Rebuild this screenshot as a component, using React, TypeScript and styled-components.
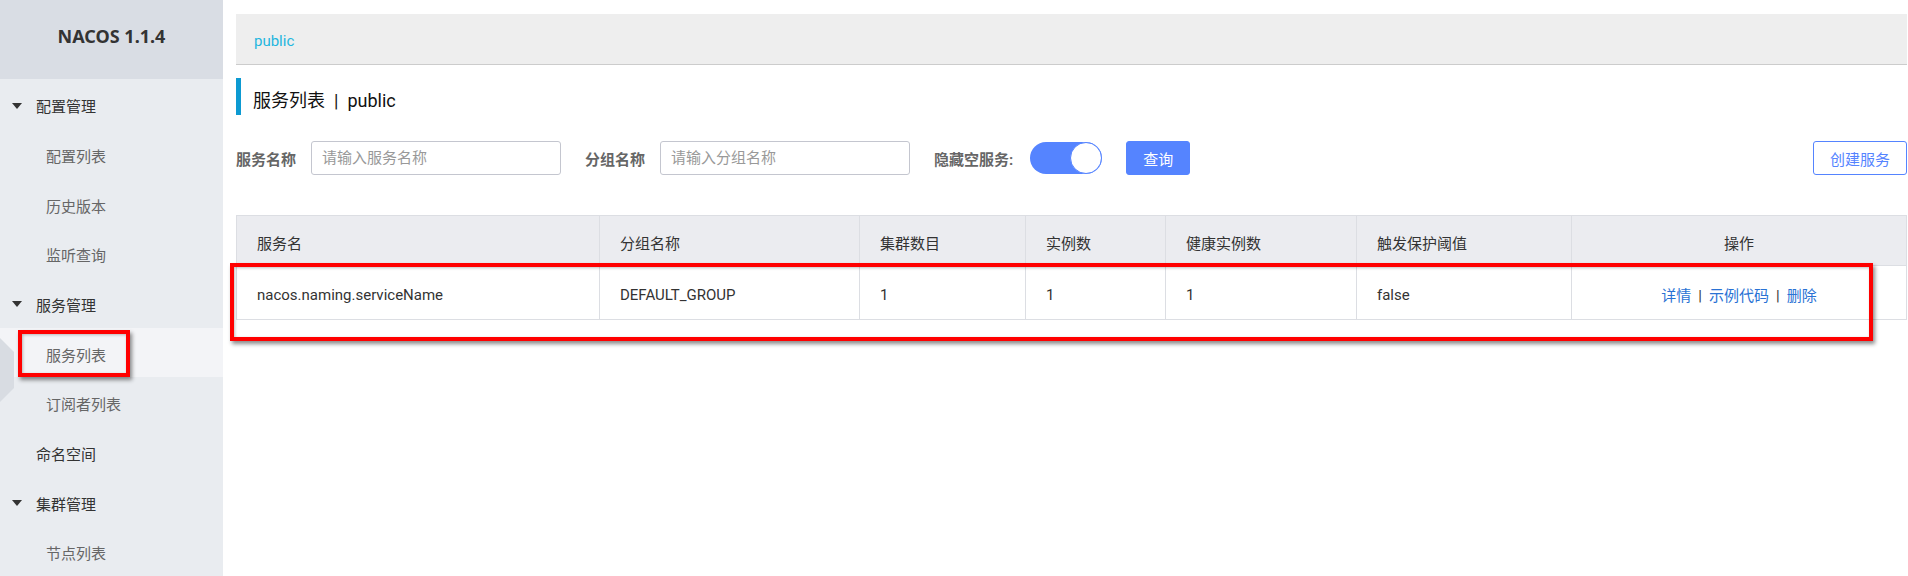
import React from 'react';
import styled, { createGlobalStyle } from 'styled-components';

const GlobalStyle = createGlobalStyle`
  html, body {
    margin: 0;
    padding: 0;
    background: #fff;
  }
  body {
    font-family: Roboto, "Noto Sans CJK SC", sans-serif;
    color: #333;
  }
  * {
    box-sizing: border-box;
  }
`;

const Layout = styled.div`
  display: flex;
  width: 1908px;
  height: 576px;
  overflow: hidden;
`;

const Sidebar = styled.aside`
  position: relative;
  flex: 0 0 223px;
  background: #e9ecf0;
  display: flex;
  flex-direction: column;
`;

const Brand = styled.div`
  height: 80px;
  background: #d9dde4;
  display: flex;
  align-items: center;
  justify-content: center;
  font-family: "Noto Sans", sans-serif;
  font-size: 18px;
  font-weight: 700;
  color: #333;
  padding-bottom: 8px;
`;

const MenuItem = styled.div<{ $level: number; $active?: boolean }>`
  position: relative;
  height: 50px;
  display: flex;
  align-items: center;
  padding-left: ${p => (p.$level === 0 ? 12 : 46)}px;
  font-size: 15px;
  color: ${p => (p.$level === 0 ? '#333' : '#666')};
  background: ${p => (p.$active ? '#f3f4f7' : 'transparent')};
  padding-top: 3px;
`;

const Caret = styled.span<{ $show: boolean }>`
  width: 24px;
  display: inline-flex;
  align-items: center;
  visibility: ${p => (p.$show ? 'visible' : 'hidden')};
  &::before {
    content: '';
    border-left: 5px solid transparent;
    border-right: 5px solid transparent;
    border-top: 6px solid #333;
  }
`;

const SideNotch = styled.svg`
  position: absolute;
  left: 0;
  top: 338px;
`;

const Annotation = styled.div`
  position: absolute;
  border: 4px solid #ff0000;
  box-shadow: 2px 3px 4px rgba(0, 0, 0, 0.45), inset 1px 1px 3px rgba(0, 0, 0, 0.25);
  pointer-events: none;
`;

const Main = styled.main`
  flex: 1;
  padding: 14px 2px 0 13px;
  display: flex;
  flex-direction: column;
`;

const Breadcrumb = styled.div`
  height: 51px;
  background: #eeeeee;
  border-bottom: 1px solid #cccccc;
  display: flex;
  align-items: center;
  padding-left: 18px;
  padding-top: 3px;
  font-size: 15px;
  color: #1fb6de;
`;

const Title = styled.h2`
  margin: 13px 0 0;
  height: 37px;
  border-left: 5px solid #0d9ad2;
  padding: 11px 0 0 12px;
  font-size: 18px;
  line-height: 24px;
  font-weight: 400;
  color: #111;
  display: flex;
`;

const TitleSep = styled.span`
  margin: 0 9px;
`;

const FilterBar = styled.div`
  margin-top: 26px;
  height: 34px;
  display: flex;
  align-items: center;
`;

const FormItem = styled.div`
  display: flex;
  align-items: center;
  margin-right: 24px;
`;

const Label = styled.label<{ $gap?: number }>`
  font-size: 15px;
  font-weight: 700;
  color: #666;
  margin-right: ${p => p.$gap ?? 15}px;
`;

const Input = styled.input`
  width: 250px;
  height: 34px;
  border: 1px solid #c4c6cf;
  border-radius: 3px;
  padding: 0 10px;
  font-size: 15px;
  font-family: inherit;
  outline: none;
  &::placeholder {
    color: #999;
  }
`;

const Switch = styled.span`
  width: 72px;
  height: 32px;
  border-radius: 16px;
  background: #5584ff;
  display: flex;
  justify-content: flex-end;
  align-items: center;
`;

const Knob = styled.span`
  width: 32px;
  height: 32px;
  border-radius: 50%;
  background: #fff;
  border: 1px solid #5584ff;
`;

const Button = styled.button<{ $primary?: boolean }>`
  height: 34px;
  padding: 0 16px;
  border-radius: 3px;
  font-size: 15px;
  font-family: inherit;
  cursor: pointer;
  border: 1px solid #5584ff;
  background: ${p => (p.$primary ? '#5584ff' : '#fff')};
  color: ${p => (p.$primary ? '#fff' : '#5584ff')};
`;

const Spacer = styled.div`
  flex: 1;
`;

const TableWrap = styled.div`
  position: relative;
  margin-top: 40px;
`;

const Table = styled.table`
  width: 1670px;
  border-collapse: collapse;
  table-layout: fixed;
  font-size: 15px;
  color: #333;
`;

const Th = styled.th<{ $center?: boolean }>`
  height: 50px;
  background: #ebecf0;
  border: 1px solid #dcdee3;
  font-weight: 400;
  text-align: ${p => (p.$center ? 'center' : 'left')};
  padding: 4px 20px 0;
`;

const Td = styled.td<{ $center?: boolean }>`
  height: 54px;
  border: 1px solid #dcdee3;
  text-align: ${p => (p.$center ? 'center' : 'left')};
  padding: 4px 20px 0;
`;

const Link = styled.a`
  color: #2a72d4;
  text-decoration: none;
  cursor: pointer;
`;

const LinkSep = styled.span`
  color: #333;
  margin: 0 7px;
`;

const menu = [
  { label: '配置管理', level: 0, caret: true },
  { label: '配置列表', level: 1 },
  { label: '历史版本', level: 1 },
  { label: '监听查询', level: 1 },
  { label: '服务管理', level: 0, caret: true },
  { label: '服务列表', level: 1, active: true },
  { label: '订阅者列表', level: 1 },
  { label: '命名空间', level: 0, caret: false },
  { label: '集群管理', level: 0, caret: true },
  { label: '节点列表', level: 1 },
];

const columns = [
  { title: '服务名', width: 363 },
  { title: '分组名称', width: 260 },
  { title: '集群数目', width: 166 },
  { title: '实例数', width: 140 },
  { title: '健康实例数', width: 191 },
  { title: '触发保护阈值', width: 215 },
  { title: '操作', width: 335, center: true },
];

const rows = [
  {
    name: 'nacos.naming.serviceName',
    group: 'DEFAULT_GROUP',
    clusters: 1,
    instances: 1,
    healthy: 1,
    threshold: 'false',
  },
];

export default function App() {
  return (
    <Layout>
      <GlobalStyle />
      <Sidebar>
        <Brand>NACOS 1.1.4</Brand>
        {menu.map(item => (
          <MenuItem key={item.label} $level={item.level} $active={item.active}>
            {item.level === 0 && <Caret $show={!!item.caret} />}
            {item.label}
            {item.active && (
              <Annotation style={{ left: 18, top: 2, width: 112, height: 47 }} />
            )}
          </MenuItem>
        ))}
        <SideNotch width="15" height="64" viewBox="0 0 15 64">
          <polygon points="0,0 14,14 14,50 0,64" fill="#d8dce2" />
        </SideNotch>
      </Sidebar>

      <Main>
        <Breadcrumb>public</Breadcrumb>
        <Title>
          服务列表<TitleSep>|</TitleSep>public
        </Title>

        <FilterBar>
          <FormItem>
            <Label>服务名称</Label>
            <Input placeholder="请输入服务名称" />
          </FormItem>
          <FormItem>
            <Label>分组名称</Label>
            <Input placeholder="请输入分组名称" />
          </FormItem>
          <FormItem>
            <Label $gap={17}>隐藏空服务:</Label>
            <Switch>
              <Knob />
            </Switch>
          </FormItem>
          <Button $primary>查询</Button>
          <Spacer />
          <Button>创建服务</Button>
        </FilterBar>

        <TableWrap>
          <Table>
            <colgroup>
              {columns.map(c => (
                <col key={c.title} style={{ width: c.width }} />
              ))}
            </colgroup>
            <thead>
              <tr>
                {columns.map(c => (
                  <Th key={c.title} $center={c.center}>
                    {c.title}
                  </Th>
                ))}
              </tr>
            </thead>
            <tbody>
              {rows.map(r => (
                <tr key={r.name}>
                  <Td>{r.name}</Td>
                  <Td>{r.group}</Td>
                  <Td>{r.clusters}</Td>
                  <Td>{r.instances}</Td>
                  <Td>{r.healthy}</Td>
                  <Td>{r.threshold}</Td>
                  <Td $center>
                    <Link>详情</Link>
                    <LinkSep>|</LinkSep>
                    <Link>示例代码</Link>
                    <LinkSep>|</LinkSep>
                    <Link>删除</Link>
                  </Td>
                </tr>
              ))}
            </tbody>
          </Table>
          <Annotation style={{ left: -6, top: 48, width: 1643, height: 78 }} />
        </TableWrap>
      </Main>
    </Layout>
  );
}
